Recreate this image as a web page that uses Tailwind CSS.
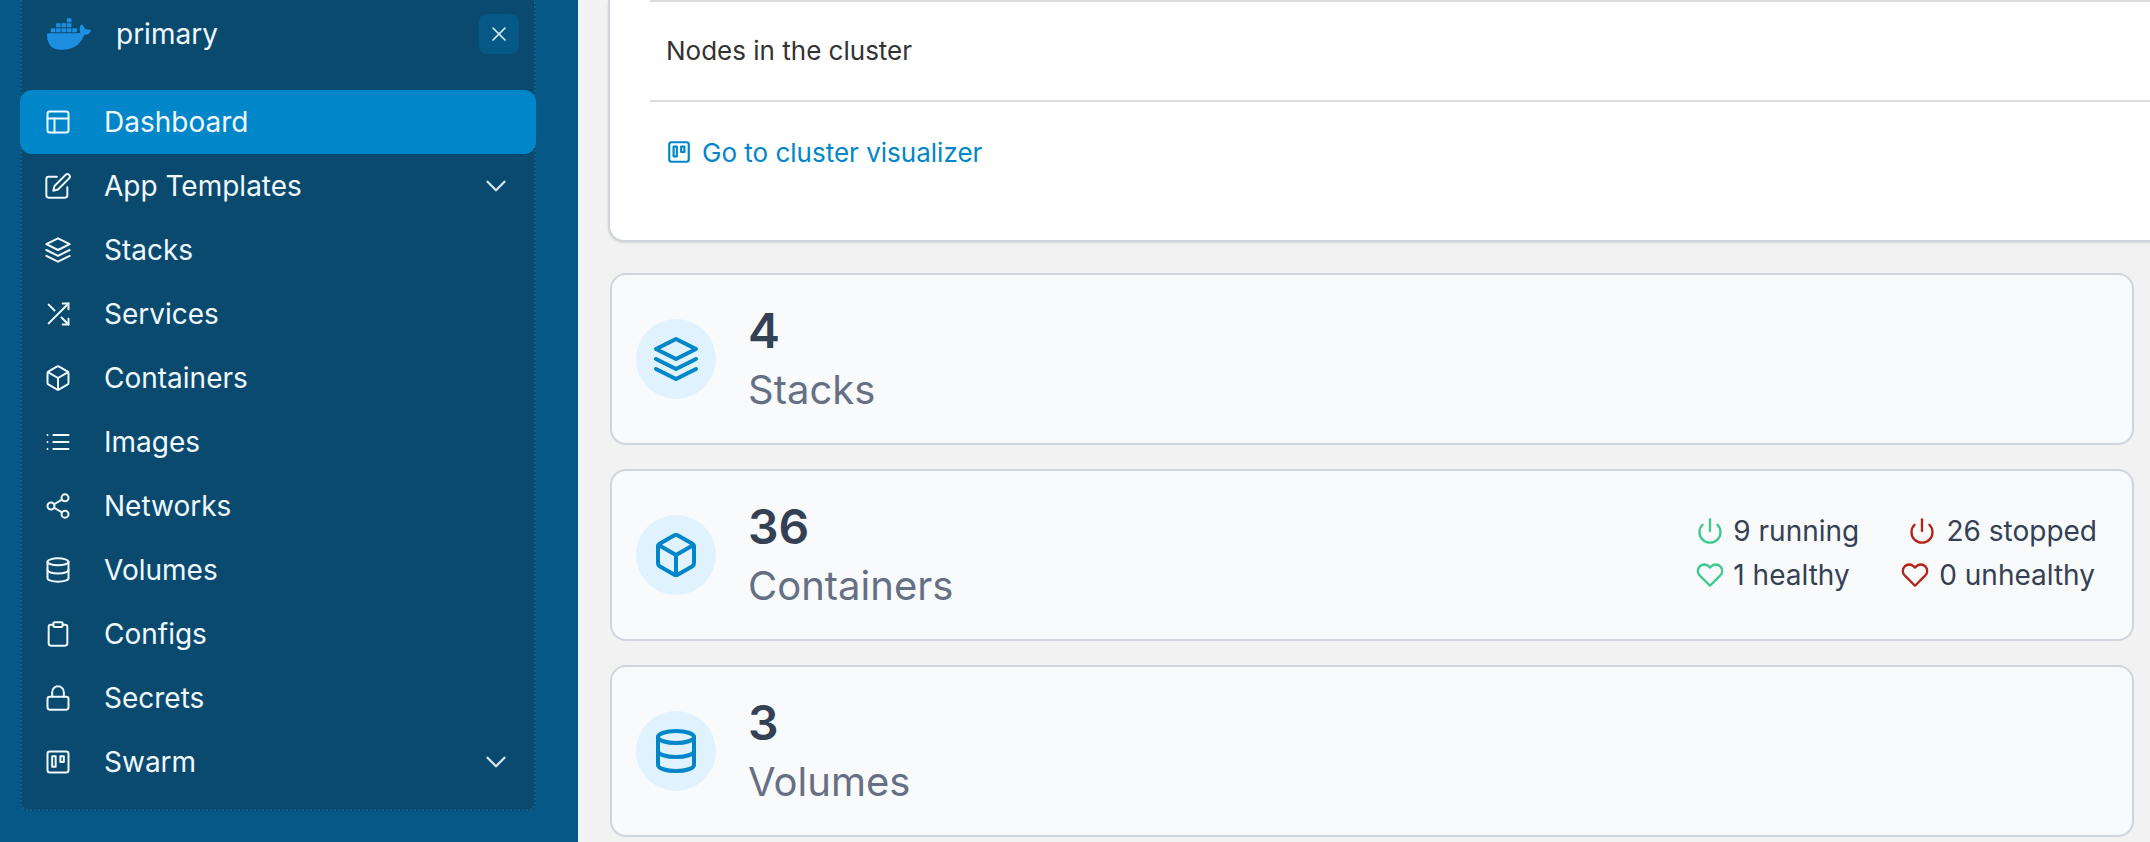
<!DOCTYPE html>
<html>
  <head>
    <script src="https://cdn.jsdelivr.net/npm/@tailwindcss/browser@4"></script>
  </head>
  <body class="bg-[#f2f2f2] font-['Inter',sans-serif]">
    <div class="flex h-[842px] w-[2150px] overflow-hidden">
      <!-- Sidebar -->
      <aside class="w-[578px] shrink-0 bg-[#065986] pl-[20px]">
        <div class="w-[516px] h-[811px] bg-[#0b4a6f] border-x-2 border-b-2 border-dotted border-[#0f5f90] rounded-b-lg text-[#f0f9ff] text-[28px]">
          <div class="flex items-center h-[68px] mb-[22px] pl-[25px] pr-[15px]">
            <svg class="w-[44px] h-[44px] text-[#1d8fe1]" viewBox="0 0 24 24" fill="currentColor"><path d="M13.983 11.078h2.119a.186.186 0 00.186-.185V9.006a.186.186 0 00-.186-.186h-2.119a.185.185 0 00-.185.185v1.888c0 .102.083.185.185.185m-2.954-5.43h2.118a.186.186 0 00.186-.186V3.574a.186.186 0 00-.186-.185h-2.118a.185.185 0 00-.185.185v1.888c0 .102.082.185.185.186m0 2.716h2.118a.187.187 0 00.186-.186V6.29a.186.186 0 00-.186-.185h-2.118a.185.185 0 00-.185.185v1.887c0 .102.082.185.185.186m-2.93 0h2.12a.186.186 0 00.184-.186V6.29a.185.185 0 00-.185-.185H8.1a.185.185 0 00-.185.185v1.887c0 .102.083.185.185.186m-2.964 0h2.119a.186.186 0 00.185-.186V6.29a.185.185 0 00-.185-.185H5.136a.186.186 0 00-.186.185v1.887c0 .102.084.185.186.186m5.893 2.715h2.118a.186.186 0 00.186-.185V9.006a.186.186 0 00-.186-.186h-2.118a.185.185 0 00-.185.185v1.888c0 .102.082.185.185.185m-2.93 0h2.12a.185.185 0 00.184-.185V9.006a.185.185 0 00-.184-.186h-2.12a.185.185 0 00-.184.185v1.888c0 .102.083.185.185.185m-2.964 0h2.119a.185.185 0 00.185-.185V9.006a.185.185 0 00-.184-.186h-2.12a.186.186 0 00-.186.186v1.887c0 .102.084.185.186.185m-2.92 0h2.12a.185.185 0 00.184-.185V9.006a.185.185 0 00-.184-.186h-2.12a.185.185 0 00-.184.185v1.888c0 .102.082.185.185.185M23.763 9.89c-.065-.051-.672-.51-1.954-.51-.338.001-.676.03-1.01.087-.248-1.7-1.653-2.53-1.716-2.566l-.344-.199-.226.327c-.284.438-.49.922-.612 1.43-.23.97-.09 1.882.403 2.661-.595.332-1.55.413-1.744.42H.751a.751.751 0 00-.75.748 11.376 11.376 0 00.692 4.062c.545 1.428 1.355 2.48 2.41 3.124 1.18.723 3.1 1.137 5.275 1.137.983.003 1.963-.086 2.93-.266a12.248 12.248 0 003.823-1.389c.98-.567 1.86-1.288 2.61-2.136 1.252-1.418 1.998-2.997 2.553-4.4h.221c1.372 0 2.215-.549 2.68-1.009.309-.293.55-.65.707-1.046l.098-.288Z"/></svg>
            <span class="ml-[25px]">primary</span>
            <button class="ml-auto flex items-center justify-center w-[40px] h-[40px] rounded-lg bg-[#065986] text-[#e0f2fe]">
              <svg class="w-[24px] h-[24px]" viewBox="0 0 24 24" fill="none" stroke="currentColor" stroke-width="1.6" stroke-linecap="round"><line x1="18" y1="6" x2="6" y2="18"/><line x1="6" y1="6" x2="18" y2="18"/></svg>
            </button>
          </div>

          <nav class="*:flex *:items-center *:h-[64px] *:pl-[22px] *:pr-[21px]">
            <a class="bg-[#0086c9] rounded-xl -mx-[2px] !pl-[24px]">
              <svg class="w-[28px] h-[28px] shrink-0 mr-[32px]" viewBox="0 0 24 24" fill="none" stroke="currentColor" stroke-width="1.7" stroke-linecap="round" stroke-linejoin="round"><rect x="3" y="3" width="18" height="18" rx="2"/><line x1="3" y1="9" x2="21" y2="9"/><line x1="9" y1="21" x2="9" y2="9"/></svg>
              <span>Dashboard</span>
            </a>
            <a>
              <svg class="w-[28px] h-[28px] shrink-0 mr-[32px]" viewBox="0 0 24 24" fill="none" stroke="currentColor" stroke-width="1.7" stroke-linecap="round" stroke-linejoin="round"><path d="M11 4H4a2 2 0 0 0-2 2v14a2 2 0 0 0 2 2h14a2 2 0 0 0 2-2v-7"/><path d="M18.5 2.5a2.121 2.121 0 0 1 3 3L12 15l-4 1 1-4 9.5-9.5z"/></svg>
              <span>App Templates</span>
              <svg class="w-[34px] h-[34px] ml-auto text-[#d5e6f0]" viewBox="0 0 24 24" fill="none" stroke="currentColor" stroke-width="1.6" stroke-linecap="round" stroke-linejoin="round"><polyline points="6 9 12 15 18 9"/></svg>
            </a>
            <a>
              <svg class="w-[28px] h-[28px] shrink-0 mr-[32px]" viewBox="0 0 24 24" fill="none" stroke="currentColor" stroke-width="1.7" stroke-linecap="round" stroke-linejoin="round"><polygon points="12 2 2 7 12 12 22 7 12 2"/><polyline points="2 17 12 22 22 17"/><polyline points="2 12 12 17 22 12"/></svg>
              <span>Stacks</span>
            </a>
            <a>
              <svg class="w-[28px] h-[28px] shrink-0 mr-[32px]" viewBox="0 0 24 24" fill="none" stroke="currentColor" stroke-width="1.7" stroke-linecap="round" stroke-linejoin="round"><polyline points="16 3 21 3 21 8"/><line x1="4" y1="20" x2="21" y2="3"/><polyline points="21 16 21 21 16 21"/><line x1="15" y1="15" x2="21" y2="21"/><line x1="4" y1="4" x2="9" y2="9"/></svg>
              <span>Services</span>
            </a>
            <a>
              <svg class="w-[28px] h-[28px] shrink-0 mr-[32px]" viewBox="0 0 24 24" fill="none" stroke="currentColor" stroke-width="1.7" stroke-linecap="round" stroke-linejoin="round"><path d="M21 16V8a2 2 0 0 0-1-1.73l-7-4a2 2 0 0 0-2 0l-7 4A2 2 0 0 0 3 8v8a2 2 0 0 0 1 1.73l7 4a2 2 0 0 0 2 0l7-4A2 2 0 0 0 21 16z"/><polyline points="3.27 6.96 12 12.01 20.73 6.96"/><line x1="12" y1="22.08" x2="12" y2="12"/></svg>
              <span>Containers</span>
            </a>
            <a>
              <svg class="w-[28px] h-[28px] shrink-0 mr-[32px]" viewBox="0 0 24 24" fill="none" stroke="currentColor" stroke-width="1.7" stroke-linecap="round" stroke-linejoin="round"><line x1="8" y1="6" x2="21" y2="6"/><line x1="8" y1="12" x2="21" y2="12"/><line x1="8" y1="18" x2="21" y2="18"/><line x1="3" y1="6" x2="3.01" y2="6"/><line x1="3" y1="12" x2="3.01" y2="12"/><line x1="3" y1="18" x2="3.01" y2="18"/></svg>
              <span>Images</span>
            </a>
            <a>
              <svg class="w-[28px] h-[28px] shrink-0 mr-[32px]" viewBox="0 0 24 24" fill="none" stroke="currentColor" stroke-width="1.7" stroke-linecap="round" stroke-linejoin="round"><circle cx="18" cy="5" r="3"/><circle cx="6" cy="12" r="3"/><circle cx="18" cy="19" r="3"/><line x1="8.59" y1="13.51" x2="15.42" y2="17.49"/><line x1="15.41" y1="6.51" x2="8.59" y2="10.49"/></svg>
              <span>Networks</span>
            </a>
            <a>
              <svg class="w-[28px] h-[28px] shrink-0 mr-[32px]" viewBox="0 0 24 24" fill="none" stroke="currentColor" stroke-width="1.7" stroke-linecap="round" stroke-linejoin="round"><ellipse cx="12" cy="5" rx="9" ry="3"/><path d="M21 12c0 1.66-4 3-9 3s-9-1.34-9-3"/><path d="M3 5v14c0 1.66 4 3 9 3s9-1.34 9-3V5"/></svg>
              <span>Volumes</span>
            </a>
            <a>
              <svg class="w-[28px] h-[28px] shrink-0 mr-[32px]" viewBox="0 0 24 24" fill="none" stroke="currentColor" stroke-width="1.7" stroke-linecap="round" stroke-linejoin="round"><path d="M16 4h2a2 2 0 0 1 2 2v14a2 2 0 0 1-2 2H6a2 2 0 0 1-2-2V6a2 2 0 0 1 2-2h2"/><rect x="8" y="2" width="8" height="4" rx="1"/></svg>
              <span>Configs</span>
            </a>
            <a>
              <svg class="w-[28px] h-[28px] shrink-0 mr-[32px]" viewBox="0 0 24 24" fill="none" stroke="currentColor" stroke-width="1.7" stroke-linecap="round" stroke-linejoin="round"><rect x="3" y="11" width="18" height="11" rx="2"/><path d="M7 11V7a5 5 0 0 1 10 0v4"/></svg>
              <span>Secrets</span>
            </a>
            <a>
              <svg class="w-[28px] h-[28px] shrink-0 mr-[32px]" viewBox="0 0 24 24" fill="none" stroke="currentColor" stroke-width="1.7" stroke-linecap="round" stroke-linejoin="round"><rect x="3" y="3" width="18" height="18" rx="2"/><rect x="7" y="7" width="3" height="9"/><rect x="14" y="7" width="3" height="5"/></svg>
              <span>Swarm</span>
              <svg class="w-[34px] h-[34px] ml-auto text-[#d5e6f0]" viewBox="0 0 24 24" fill="none" stroke="currentColor" stroke-width="1.6" stroke-linecap="round" stroke-linejoin="round"><polyline points="6 9 12 15 18 9"/></svg>
            </a>
          </nav>
        </div>
      </aside>

      <!-- Main content -->
      <main class="flex-1 min-w-0 pl-[30px]">
        <!-- Cluster card, runs past the right edge of the window -->
        <div class="w-[1600px] h-[242px] bg-white border-l-2 border-b-2 border-[#d0d5dd] rounded-bl-2xl shadow-sm pl-[40px]">
          <div class="flex items-center h-[102px] border-y-2 border-[#dcdcdc] pl-[16px] pb-[2px] text-[26px] text-[#333333]">
            Nodes in the cluster
          </div>
          <a class="flex items-center h-[102px] pl-[16px] pb-[2px] text-[26px] text-[#0086c9]">
            <svg class="w-[26px] h-[26px] mr-[10px]" viewBox="0 0 24 24" fill="none" stroke="currentColor" stroke-width="2" stroke-linecap="round" stroke-linejoin="round"><rect x="3" y="3" width="18" height="18" rx="2"/><rect x="7" y="7" width="3" height="9"/><rect x="14" y="7" width="3" height="5"/></svg>
            Go to cluster visualizer
          </a>
        </div>

        <div class="flex flex-col gap-[24px] w-[1524px] mt-[31px] ml-[2px]">
          <!-- Stacks -->
          <div class="flex items-center h-[172px] bg-[#f9fafc] border-2 border-[#d0d5dd] rounded-2xl pl-[24px]">
            <div class="flex items-center justify-center w-[80px] h-[80px] rounded-full bg-[#e0f2fe] text-[#0086c9] mr-[32px]">
              <svg class="w-[48px] h-[48px]" viewBox="0 0 24 24" fill="none" stroke="currentColor" stroke-width="2" stroke-linecap="round" stroke-linejoin="round"><polygon points="12 2 2 7 12 12 22 7 12 2"/><polyline points="2 17 12 22 22 17"/><polyline points="2 12 12 17 22 12"/></svg>
            </div>
            <div class="pt-[2px]">
              <div class="text-[48px] leading-[60px] font-semibold text-[#344054]">4</div>
              <div class="text-[40px] leading-[58px] text-[#667085]">Stacks</div>
            </div>
          </div>

          <!-- Containers -->
          <div class="flex items-center h-[172px] bg-[#f9fafc] border-2 border-[#d0d5dd] rounded-2xl pl-[24px] pr-[35px]">
            <div class="flex items-center justify-center w-[80px] h-[80px] rounded-full bg-[#e0f2fe] text-[#0086c9] mr-[32px]">
              <svg class="w-[48px] h-[48px]" viewBox="0 0 24 24" fill="none" stroke="currentColor" stroke-width="2" stroke-linecap="round" stroke-linejoin="round"><path d="M21 16V8a2 2 0 0 0-1-1.73l-7-4a2 2 0 0 0-2 0l-7 4A2 2 0 0 0 3 8v8a2 2 0 0 0 1 1.73l7 4a2 2 0 0 0 2 0l7-4A2 2 0 0 0 21 16z"/><polyline points="3.27 6.96 12 12.01 20.73 6.96"/><line x1="12" y1="22.08" x2="12" y2="12"/></svg>
            </div>
            <div class="pt-[2px]">
              <div class="text-[48px] leading-[60px] font-semibold text-[#344054]">36</div>
              <div class="text-[40px] leading-[58px] text-[#667085]">Containers</div>
            </div>
            <div class="ml-auto pb-[4px] grid grid-cols-[auto_auto] gap-x-[42px] gap-y-[4px] text-[28px] leading-[40px] text-[#344054]">
              <div class="flex items-center gap-[9px]">
                <svg class="w-[28px] h-[28px] text-[#3ccb8d]" viewBox="0 0 24 24" fill="none" stroke="currentColor" stroke-width="2" stroke-linecap="round" stroke-linejoin="round"><path d="M18.36 6.64a9 9 0 1 1-12.73 0"/><line x1="12" y1="2" x2="12" y2="12"/></svg>
                <span>9 running</span>
              </div>
              <div class="flex items-center justify-end gap-[10px]">
                <svg class="w-[28px] h-[28px] text-[#b42318]" viewBox="0 0 24 24" fill="none" stroke="currentColor" stroke-width="2" stroke-linecap="round" stroke-linejoin="round"><path d="M18.36 6.64a9 9 0 1 1-12.73 0"/><line x1="12" y1="2" x2="12" y2="12"/></svg>
                <span>26 stopped</span>
              </div>
              <div class="flex items-center gap-[9px]">
                <svg class="w-[28px] h-[28px] text-[#3ccb8d]" viewBox="0 0 24 24" fill="none" stroke="currentColor" stroke-width="2" stroke-linecap="round" stroke-linejoin="round"><path d="M20.84 4.61a5.5 5.5 0 0 0-7.78 0L12 5.67l-1.06-1.06a5.5 5.5 0 0 0-7.78 7.78l1.06 1.06L12 21.23l7.78-7.78 1.06-1.06a5.5 5.5 0 0 0 0-7.78z"/></svg>
                <span>1 healthy</span>
              </div>
              <div class="flex items-center justify-end gap-[10px] pr-[2px]">
                <svg class="w-[28px] h-[28px] text-[#b42318]" viewBox="0 0 24 24" fill="none" stroke="currentColor" stroke-width="2" stroke-linecap="round" stroke-linejoin="round"><path d="M20.84 4.61a5.5 5.5 0 0 0-7.78 0L12 5.67l-1.06-1.06a5.5 5.5 0 0 0-7.78 7.78l1.06 1.06L12 21.23l7.78-7.78 1.06-1.06a5.5 5.5 0 0 0 0-7.78z"/></svg>
                <span>0 unhealthy</span>
              </div>
            </div>
          </div>

          <!-- Volumes -->
          <div class="flex items-center h-[172px] bg-[#f9fafc] border-2 border-[#d0d5dd] rounded-2xl pl-[24px]">
            <div class="flex items-center justify-center w-[80px] h-[80px] rounded-full bg-[#e0f2fe] text-[#0086c9] mr-[32px]">
              <svg class="w-[48px] h-[48px]" viewBox="0 0 24 24" fill="none" stroke="currentColor" stroke-width="2" stroke-linecap="round" stroke-linejoin="round"><ellipse cx="12" cy="5" rx="9" ry="3"/><path d="M21 12c0 1.66-4 3-9 3s-9-1.34-9-3"/><path d="M3 5v14c0 1.66 4 3 9 3s9-1.34 9-3V5"/></svg>
            </div>
            <div class="pt-[2px]">
              <div class="text-[48px] leading-[60px] font-semibold text-[#344054]">3</div>
              <div class="text-[40px] leading-[58px] text-[#667085]">Volumes</div>
            </div>
          </div>
        </div>
      </main>
    </div>
  </body>
</html>
